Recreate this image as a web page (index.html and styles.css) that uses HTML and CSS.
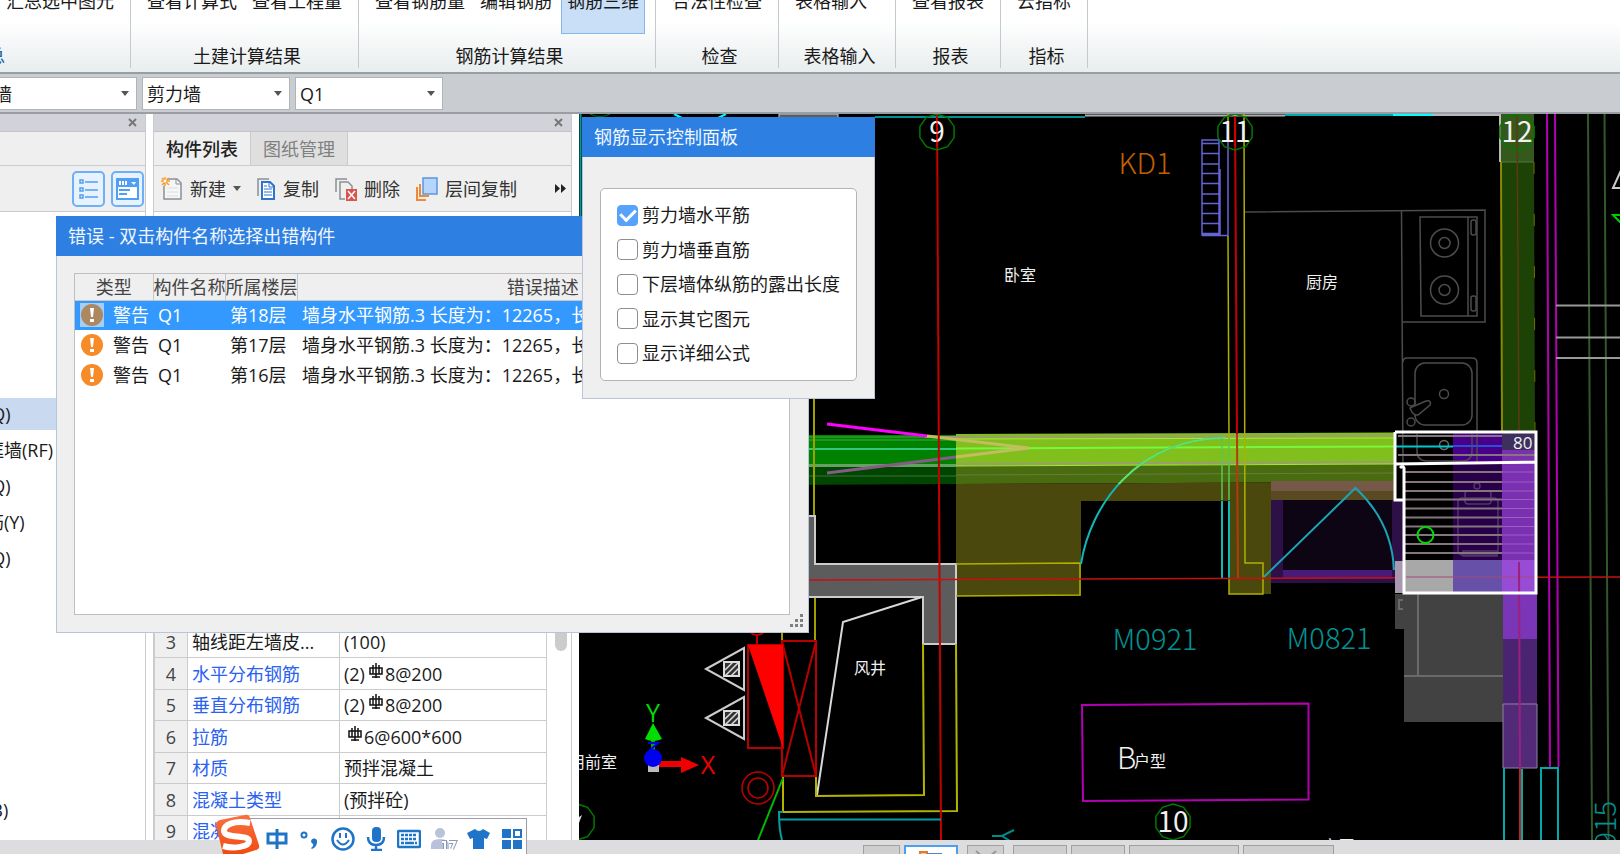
FILE: index.html
```
<!DOCTYPE html>
<html lang="zh-CN">
<head>
    <meta charset="UTF-8">
    <meta name="viewport" content="width=device-width, initial-scale=1.0">
    <title>钢筋三维</title>
    <link rel="stylesheet" href="styles.css">
</head>
<body>
    <header class="ribbon">
        <section class="group group-first">
            <div class="group-buttons"><button class="ribbon-button">汇总选中图元</button></div>
            <div class="group-name">汇总</div>
        </section>
        <section class="group">
            <div class="group-buttons">
                <button class="ribbon-button">查看计算式</button>
                <button class="ribbon-button">查看工程量</button>
            </div>
            <div class="group-name">土建计算结果</div>
        </section>
        <section class="group">
            <div class="group-buttons">
                <button class="ribbon-button">查看钢筋量</button>
                <button class="ribbon-button">编辑钢筋</button>
                <button class="ribbon-button active">钢筋三维</button>
            </div>
            <div class="group-name">钢筋计算结果</div>
        </section>
        <section class="group">
            <div class="group-buttons"><button class="ribbon-button">合法性检查</button></div>
            <div class="group-name">检查</div>
        </section>
        <section class="group group-wide">
            <div class="group-buttons"><button class="ribbon-button">表格输入</button></div>
            <div class="group-name">表格输入</div>
        </section>
        <section class="group">
            <div class="group-buttons"><button class="ribbon-button">查看报表</button></div>
            <div class="group-name">报表</div>
        </section>
        <section class="group">
            <div class="group-buttons"><button class="ribbon-button">云指标</button></div>
            <div class="group-name">指标</div>
        </section>
    </header>

    <div class="selector-bar">
        <div class="picker"><select aria-label="构件大类"><option>墙</option></select></div>
        <div class="picker"><select aria-label="构件类型"><option>剪力墙</option></select></div>
        <div class="picker"><select aria-label="构件"><option>Q1</option></select></div>
    </div>

    <main class="workspace">
        <aside class="tree-panel">
            <div class="panel-head"><button class="close" aria-label="关闭"><svg width="9" height="9" viewBox="0 0 9 9"><path d="M1 1L8 8M8 1L1 8"/></svg></button></div>
            <div class="tree-title"></div>
            <div class="tree-tools">
                <button class="view-button" aria-label="列表">
                    <svg width="21" height="22" viewBox="0 0 21 22" fill="none" stroke="#4f9ff5"><path d="M2 2h3v3H2zM2 10h3v3H2zM2 17h3v3H2z" stroke-width="1.500"/><path d="M7 4h13M7 12h13M7 19h13" stroke-width="1.500"/></svg>
                </button>
                <button class="view-button" aria-label="窗口">
                    <svg width="23" height="22" viewBox="0 0 23 22"><path d="M1 1h21v20H1z" fill="#fff" stroke="#4f9ff5" stroke-width="2"/><path d="M1 1h21v8H1z" fill="#4f9ff5"/><path d="M4 3v4M7 3v4M10 3v4" stroke="#fff" stroke-width="2"/><path d="M15 4h5l-2 3z" fill="#fff"/><path d="M3 12h11M3 16h8" stroke="#4f9ff5" stroke-width="2"/></svg>
                </button>
            </div>
            <div class="tree-view">
                <ul class="tree">
                    <li class="selected">剪力墙(Q)</li>
                    <li>人防门框墙(RF)</li>
                    <li>砌体墙(Q)</li>
                    <li>砌体加筋(Y)</li>
                    <li>保温墙(Q)</li>
                </ul>
                <ul class="tree">
                    <li>现浇板(B)</li>
                </ul>
            </div>
        </aside>

        <aside class="list-panel">
            <div class="panel-head"><button class="close" aria-label="关闭"><svg width="9" height="9" viewBox="0 0 9 9"><path d="M1 1L8 8M8 1L1 8"/></svg></button></div>
            <div class="tabs">
                <button class="tab current">构件列表</button>
                <button class="tab">图纸管理</button>
            </div>
            <div class="tools">
                <button class="tool">
                    <svg width="22" height="24" viewBox="0 0 22 24"><path d="M6 2h10l4 4v16H3V9" fill="#f6f6f6" stroke="#8a9096" stroke-width="1.500"/><path d="M15 2v5h5" fill="none" stroke="#8a9096"/><path d="M6 11h11M6 15h11M6 19h11" stroke="#ddd"/><path d="M4 0v9M0 4h9M1 1l7 7M8 1L1 8" stroke="#f79a28" stroke-width="1.500"/><circle cx="4" cy="4" r="1.500" fill="#fff"/></svg>
                    <span>新建</span><i class="caret"></i>
                </button>
                <button class="tool">
                    <svg width="19" height="24" viewBox="0 0 19 24"><path d="M1 19V2h11" fill="none" stroke="#8a9096" stroke-width="1.500"/><path d="M5 5h8l4 4v13H5z" fill="#fff" stroke="#2f74d0" stroke-width="2"/><path d="M12 5v5h5M7 12h8M7 15h8M7 18h8M7 9h3" fill="none" stroke="#2f74d0"/></svg>
                    <span>复制</span>
                </button>
                <button class="tool">
                    <svg width="22" height="24" viewBox="0 0 22 24"><path d="M1 15V2h11M5 18V5h8l4 4v3M5 18v4h5" fill="none" stroke="#8a9096" stroke-width="1.500"/><path d="M11 12h11v12H11z" fill="#d9534f"/><path d="M13 14l7 8M20 14l-7 8" stroke="#fff" stroke-width="1.500"/></svg>
                    <span>删除</span>
                </button>
                <button class="tool">
                    <svg width="22" height="24" viewBox="0 0 22 24"><path d="M1 10v13h9M4 7v12h9" fill="none" stroke="#f0883a" stroke-width="2"/><path d="M7 1h14v16H7z" fill="#b5d5fa" stroke="#5a96e0" stroke-width="1.500"/></svg>
                    <span>层间复制</span>
                </button>
                <button class="more" aria-label="更多"><svg width="12" height="9" viewBox="0 0 12 9"><path d="M0 0l5 4.500-5 4.500zM6 0l5 4.500-5 4.500z" fill="#222"/></svg></button>
            </div>
            <div class="property-view">
                <table class="properties">
                    <tbody>
                        <tr><th>3</th><td class="plain">轴线距左墙皮...</td><td>(100)</td></tr>
                        <tr><th>4</th><td>水平分布钢筋</td><td>(2)<svg class="rebar" viewBox="0 0 16 16"><use href="#rebar"/></svg>8@200</td></tr>
                        <tr><th>5</th><td>垂直分布钢筋</td><td>(2)<svg class="rebar" viewBox="0 0 16 16"><use href="#rebar"/></svg>8@200</td></tr>
                        <tr><th>6</th><td>拉筋</td><td><svg class="rebar" viewBox="0 0 16 16"><use href="#rebar"/></svg>6@600*600</td></tr>
                        <tr><th>7</th><td>材质</td><td>预拌混凝土</td></tr>
                        <tr><th>8</th><td>混凝土类型</td><td>(预拌砼)</td></tr>
                        <tr><th>9</th><td>混凝土强度</td><td></td></tr>
                    </tbody>
                </table>
                <div class="scroll"></div>
            </div>
        </aside>

        <section class="canvas">
            <svg class="drawing" viewBox="579 114 1041 726" preserveAspectRatio="xMinYMin slice" fill="none">
                <defs>
                    <path id="rebar" d="M2 5h12v6H2zM5 2v9M8 0v15M11 2v9M4 14h8" fill="none" stroke="#111" stroke-width="1.500"/>
                    <path id="axis" d="M0-18L10.600-14.600 17.100-5.600V5.600L10.600 14.600 0 18-10.600 14.600-17.100 5.600V-5.600L-10.600-14.600Z" stroke="#007a00" stroke-width="1.500"/>
                    <path id="swing" d="M1081 564C1090 506 1136 439 1225 438" stroke-width="2"/>
                    <clipPath id="on-beam"><path d="M1081 434h160v50h-160z"/></clipPath>
                    <g id="outlet">
                        <path d="M706 669L744 648V690Z" stroke="#ccc" stroke-width="2"/>
                        <path d="M724 662h15v14h-15z" fill="#333" stroke="#ddd" stroke-width="2"/>
                        <path d="M725 670l8-8M725 676l14-14M731 676l8-8" stroke="#ddd" stroke-width="1.500"/>
                    </g>
                </defs>

                <!-- top edge -->
                <path d="M580.500 114V216" stroke="#009a9a" stroke-width="2"/>
                <path d="M779 114h59v4h-59z" fill="#5e5e5e" stroke="#ccc"/>
                <path d="M590 114q10 5 20 0" stroke="#007a00"/>
                <path d="M674 114l8 4M718 118l8-4" stroke="#0ff" stroke-width="2"/>
                <path d="M875 117H1085" stroke="#009090" stroke-width="2"/>
                <path d="M1085 115.500H1285" stroke="#b0b0b0" stroke-width="2"/>
                <path d="M1285 115H1393" stroke="#00a8a8" stroke-width="2"/>
                <path d="M1393 115h40" stroke="#0ff" stroke-width="2"/>
                <path d="M1433 115h67v47" stroke="#b8b8b8" stroke-width="2"/>

                <!-- kitchen -->
                <g stroke="#4c4c4c" stroke-width="1.500">
                    <path d="M1245 212L1485 210V322H1403M1401.500 211L1403 465"/>
                    <path d="M1420 217h57v99h-56zM1468 217v99"/>
                    <rect x="1471" y="220" width="5" height="15" rx="2"/>
                    <rect x="1471" y="296" width="5" height="15" rx="2"/>
                    <circle cx="1444.500" cy="243" r="14"/><circle cx="1444.500" cy="243" r="5.500"/>
                    <circle cx="1444.500" cy="290" r="14"/><circle cx="1444.500" cy="290" r="5.500"/>
                    <path d="M1403 362q0-4 4-4h65q5 0 5 5V465"/>
                    <rect x="1415" y="363" width="57" height="62" rx="10"/>
                    <circle cx="1444" cy="394" r="4.500"/>
                    <circle cx="1411" cy="402" r="4"/><circle cx="1411" cy="422" r="4"/>
                    <path d="M1410 408q3 8 8 7l12-10q2-5-4-4l-14 6z" fill="#000"/>
                </g>

                <!-- radiator -->
                <path d="M1202 140h17v95h-17zM1220 169v66M1202 143.500h17M1202 153.500h17M1202 164h17M1202 173.500h17M1202 183.500h17M1202 194h17M1202 203.500h17M1202 213.500h17M1202 223.500h17M1202 233.500h17M1202 235.500h26V140" stroke="#6464d8" stroke-width="1.500"/>

                <!-- wall column on axis 12 -->
                <path d="M1501 114h33v48h-33z" fill="#35591c"/>
                <path d="M1501 162h33l1 270h-33z" fill="#1c4206"/>
                <path d="M1501 162h33" stroke="#4a7a34"/>
                <path d="M1501 162L1502 432" stroke="#8a8a00" stroke-width="2"/>
                <path d="M1534 162L1535 432" stroke="#6c7000" stroke-dasharray="12 40"/>
                <path d="M1517 114L1519 432" stroke="#5e3a10" stroke-width="1.500"/>

                <!-- outer wall lines -->
                <path d="M1547 114L1550 767M1555 114L1558.500 767" stroke="#b400b4" stroke-width="2"/>
                <path d="M1588 114L1592 840M1604.500 114L1608.500 840" stroke="#30592a" stroke-width="2"/>
                <path d="M1556 305.500h64M1556 337.500h64M1556 358h64" stroke="#999" stroke-width="2"/>
                <path d="M1622 168l-9 20h9" stroke="#ccc" stroke-width="2"/>
                <path d="M1622 215h-9l9 9" stroke="#0c0" stroke-width="2"/>

                <!-- beam bands -->
                <path d="M785 435h171v31H785z" fill="#008200"/>
                <path d="M785 466h171v18l-171 1z" fill="#004500"/>
                <path d="M956 434L1395 432.500V464L956 466z" fill="#80bf1c"/>
                <path d="M956 466L1395 464V482L956 484z" fill="#4a6c10"/>
                <path d="M956 484L1395 482V500H1271V594h-42V501H1081V596H956z" fill="#4b480d"/>
                <path d="M809 437H956M809 440H956" stroke="#3aac3a"/>
                <path d="M809 465.500H956" stroke="#64a264" stroke-width="3"/>
                <path d="M809 449H956" stroke="#32c87c" stroke-width="2"/>
                <path d="M809 476H956" stroke="#3c743c"/>
                <path d="M925 437L1395 435.500M956 464L1395 462" stroke="#9c9c70" stroke-width="2"/>
                <path d="M956 439L1395 438M956 466L1395 464" stroke="#a4e838"/>
                <path d="M956 448.500L1395 446.500" stroke="#78f83c" stroke-width="2"/>
                <path d="M956 475L1395 473" stroke="#6a7c38"/>
                <path d="M827 424L927 436" stroke="#f0f" stroke-width="3"/>
                <path d="M827 473L956 457" stroke="#865c86" stroke-width="3"/>
                <path d="M927 436L1029 448 956 457" stroke="#c4bc60" stroke-width="3"/>

                <!-- walls and shaft -->
                <path d="M814 398V516M815 597V640M782 632v8" stroke="#a0a000" stroke-width="2"/>
                <path d="M785 516h30v48h141v80h-33v-47H785z" fill="#5c5c5c" stroke="#ccc" stroke-width="2"/>
                <path d="M922 597L843 622 817 795" stroke="#d8d8d8" stroke-width="2"/>
                <path d="M816 776v20l108-1-1-151M783 777v35l174-1-1-167" stroke="#b4b400" stroke-width="2"/>
                <path d="M956 564l124-1v32l-124 1M1244 114l1 449h18v31h-34v-16M1228 236l1 204M1228 114v26" stroke="#b0b000" stroke-width="1.500"/>

                <!-- doors -->
                <path d="M1271 481h124v19h-124z" fill="#755848"/>
                <path d="M1271 491h124v9h-124z" fill="#5a4a22"/>
                <path d="M1271 500h132v83h-132z" fill="#2d1048"/>
                <path d="M1283 500h109v70h-109z" fill="#0d0414"/>
                <path d="M1283 570h109v9h-109z" fill="#4a1a78"/>
                <path d="M1264 577L1355.500 488Q1392 522 1394 570" stroke="#1aa4b4" stroke-width="2"/>
                <use href="#swing" stroke="#10b8b8"/>
                <use href="#swing" stroke="#66e060" clip-path="url(#on-beam)"/>
                <path d="M1222 438v62M1229 438v62" stroke="#5cc850" stroke-width="1.500"/>
                <path d="M1222 501v77M1229 501v77" stroke="#10b8b8" stroke-width="2"/>

                <!-- axis lines -->
                <path d="M937 114L941 840M1235 116L1237 434" stroke="#c40000" stroke-width="2"/>
                <path d="M1237 434L1238 578" stroke="#b43c0c" stroke-width="2"/>
                <path d="M809 580L1620 577" stroke="#c81010" stroke-width="1.500"/>

                <!-- selected slab -->
                <path d="M1404 594h99v128h-99zM1395 594h9v35h-9z" fill="#424242"/>
                <path d="M1418 594v82M1404 676h99M1403 600h-4v9h4" stroke="#6a6a6a" stroke-width="2"/>
                <path d="M1395 561h9v32h-9z" fill="#a898b0"/>
                <path d="M1405 560h49v33h-49z" fill="#a8a8a8"/>
                <path d="M1453 433h49v31h-49z" fill="#48008a"/>
                <path d="M1453 464h49v96h-49z" fill="#28004a"/>
                <path d="M1453 560h49v33h-49z" fill="#6650a8"/>
                <path d="M1502 433h34v17h-34z" fill="#3e305c"/>
                <path d="M1502 450h34v110h-34z" fill="#7a30b0"/>
                <path d="M1502 560h34v33h-34z" fill="#984cd6"/>
                <g stroke="#54346e" stroke-width="1.500">
                    <rect x="1458" y="498" width="40" height="57" rx="4"/>
                    <rect x="1465" y="491" width="26" height="13" rx="3"/>
                    <rect x="1463" y="551" width="34" height="5"/>
                    <circle cx="1477" cy="486" r="3"/>
                </g>
                <path d="M1417 434v17q0 10 10 10h35q10 0 10-10v-17M1477 434v28" stroke="#4c4c4c" stroke-width="1.500"/>
                <circle cx="1444" cy="445" r="4.500" stroke="#6c6c6c" stroke-width="1.500"/>
                <path d="M1398 436h104M1398 455h137M1405 472h97M1405 482h97M1405 491h97M1405 499.500h97M1405 508.500h97M1405 517.500h97M1405 526.500h97M1405 535h97M1405 544h97M1405 553h97" stroke="#84767a" stroke-width="2"/>
                <path d="M1502 472h32M1502 482h32M1502 491h32M1502 499.500h32M1502 508.500h32M1502 517.500h32M1502 526.500h32M1502 535h32M1502 544h32M1502 553h32" stroke="#9860c4"/>
                <path d="M1396 446.500h57" stroke="#00c8d0" stroke-width="2"/>
                <path d="M1453 446h49" stroke="#2c50d0" stroke-width="2"/>
                <path d="M1406 577h130" stroke="#a84878"/>
                <path d="M1503 593h34v46h-34z" fill="#7a36b6"/>
                <path d="M1503 639h34v65h-34z" fill="#4a2470"/>
                <path d="M1503 704h34v64h-34z" fill="#522a78" stroke="#9080a8"/>
                <path d="M1519 562L1520 768" stroke="#9c2080" stroke-width="2"/>
                <path d="M1520 768v72" stroke="#c02020" stroke-width="2"/>
                <path d="M1395 432h141v161h-132V468q-1-3-4 0M1395 432v68h8M1395 464l141-2" stroke="#fff" stroke-width="3"/>
                <circle cx="1425.500" cy="535" r="8" stroke="#0d0" stroke-width="2"/>
                <path d="M1504 840v-72M1522 769v71M1541 840v-72h17v72" stroke="#00a8a8" stroke-width="2"/>

                <!-- lower left equipment -->
                <circle cx="757" cy="626" r="9" stroke="#c00000" stroke-width="2"/>
                <path d="M757 635v10M748 645h35v103h-35zM782 641h34v135h-34zM782 641l34 135M816 641l-34 135" stroke="#b80000" stroke-width="2"/>
                <path d="M748 645h35v103z" fill="#f00"/>
                <circle cx="758" cy="788" r="16" stroke="#c00000" stroke-width="1.500"/>
                <circle cx="758" cy="788" r="10" stroke="#c00000" stroke-width="1.500"/>
                <use href="#outlet"/>
                <use href="#outlet" y="49"/>
                <path d="M783 778L758 840" stroke="#0b0" stroke-width="2"/>
                <path d="M783 812h-4q0 18 3 28M779 819.500h162" stroke="#00a0a0" stroke-width="2"/>
                <path d="M992 836h10l12-6M1002 836l8 5" stroke="#008a8a" stroke-width="2"/>
                <path d="M1082 705L1308.500 703.500V799.500L1083 801Z" stroke="#b400b4" stroke-width="2"/>

                <!-- coordinate system -->
                <path d="M648 764h11v8h-11z" fill="#bbb"/>
                <path d="M659 761h22v6h-22zM681 757l18 8-18 8z" fill="#f00000"/>
                <path d="M653 738v14" stroke="#0a0" stroke-width="4"/>
                <path d="M653 723l9 16q-9 4-17 0z" fill="#0d0"/>
                <circle cx="653" cy="758" r="9" fill="#0000f0"/>
                <path d="M648 743h10l-8 7" stroke="#0000e8" stroke-width="2"/>

                <use href="#axis" x="937" y="132"/>
                <use href="#axis" x="1235" y="132"/>
                <use href="#axis" x="1517" y="132"/>
                <use href="#axis" x="1173" y="822"/>
                <use href="#axis" x="577" y="822"/>
                <path d="M579 817l3-2-3 8z" fill="#ddd"/>
                <g class="axis-text">
                    <text x="937" y="142">9</text>
                    <text x="1235" y="142">11</text>
                    <text x="1517" y="142">12</text>
                    <text x="1173" y="832">10</text>
                </g>
                <path d="M1235 120v26M937 120v26" stroke="#e00000"/>
                <g class="code-text">
                    <text class="orange" x="1145" y="174">KD1</text>
                    <text x="1155" y="650">M0921</text>
                    <text x="1329" y="649">M0821</text>
                    <text class="upright" transform="translate(1616 801) rotate(-90)">M0915</text>
                </g>
                <g class="room-text">
                    <text x="1020" y="281">卧室</text>
                    <text x="1322" y="288">厨房</text>
                    <text x="870" y="674">风井</text>
                    <text x="593" y="768">用前室</text>
                    <text x="1150" y="767">户型</text>
                    <text x="1338" y="852">客厅</text>
                </g>
                <text class="unit" x="1117" y="769">B</text>
                <text class="size" x="1513" y="449">80</text>
                <text class="axis-y" x="653" y="722">Y</text>
                <text class="axis-x" x="708" y="774">X</text>
            </svg>
        </section>
    </main>

    <footer class="status">
        <button aria-label="选择"></button>
        <button class="on" aria-label="显示"><svg width="24" height="8" viewBox="0 0 24 8"><path d="M1 8V1h7v7" fill="#f8c89a" stroke="#e87828" stroke-width="2"/><path d="M8 3h14v5" fill="none" stroke="#4a86d0" stroke-width="2"/></svg></button>
        <button class="apart" aria-label="剪切"><svg width="24" height="8" viewBox="0 0 24 8"><path d="M2 1l8 7M22 1l-8 7" stroke="#999" stroke-width="2"/></svg></button>
        <button class="mid apart" aria-label="镜像"></button>
        <button class="mid" aria-label="移动"></button>
        <button class="long" aria-label="捕捉"></button>
        <button class="wide" aria-label="正交"></button>
    </footer>

    <section class="window error-window">
        <h2 class="window-title">错误 - 双击构件名称选择出错构件</h2>
        <div class="error-box">
            <table class="errors">
                <thead>
                    <tr><th class="col-type">类型</th><th class="col-name">构件名称</th><th class="col-floor">所属楼层</th><th>错误描述</th></tr>
                </thead>
                <tbody>
                    <tr class="selected"><td><span class="kind"><svg class="warn" viewBox="0 0 24 24"><circle cx="12" cy="12" r="11"/><path d="M10 5h4l-1 9h-2zM10 16h4v3h-4z" fill="#fff"/></svg>警告</span></td><td>Q1</td><td>第18层</td><td>墙身水平钢筋.3 长度为：12265，长</td></tr>
                    <tr><td><span class="kind"><svg class="warn" viewBox="0 0 24 24"><circle cx="12" cy="12" r="11"/><path d="M10 5h4l-1 9h-2zM10 16h4v3h-4z" fill="#fff"/></svg>警告</span></td><td>Q1</td><td>第17层</td><td>墙身水平钢筋.3 长度为：12265，长</td></tr>
                    <tr><td><span class="kind"><svg class="warn" viewBox="0 0 24 24"><circle cx="12" cy="12" r="11"/><path d="M10 5h4l-1 9h-2zM10 16h4v3h-4z" fill="#fff"/></svg>警告</span></td><td>Q1</td><td>第16层</td><td>墙身水平钢筋.3 长度为：12265，长</td></tr>
                </tbody>
            </table>
        </div>
        <svg class="grip" width="13" height="13" viewBox="0 0 13 13"><path d="M10 0h3v3h-3zM5 5h3v3H5zM10 5h3v3h-3zM0 10h3v3H0zM5 10h3v3H5zM10 10h3v3h-3z" fill="#7a8088"/></svg>
    </section>

    <section class="window rebar-window">
        <h2 class="window-title">钢筋显示控制面板</h2>
        <form class="options">
            <label><input type="checkbox" checked>剪力墙水平筋</label>
            <label><input type="checkbox">剪力墙垂直筋</label>
            <label><input type="checkbox">下层墙体纵筋的露出长度</label>
            <label><input type="checkbox">显示其它图元</label>
            <label><input type="checkbox">显示详细公式</label>
        </form>
    </section>

    <div class="ime">
        <svg class="ime-logo" width="46" height="40" viewBox="0 0 46 40">
            <defs><linearGradient id="flame" x1="0" y1="0" x2="0" y2="1"><stop offset="0" stop-color="#fa7040"/><stop offset="1" stop-color="#f04c12"/></linearGradient></defs>
            <path d="M1 11Q1 7 5 6L30 1q4-1 5 3l9 27q1 4-3 5l-13 4H8z" fill="url(#flame)"/>
            <path d="M35 9C18 6 9 11 9 17c0 8 25 3 25 10 0 6-15 8-26 5" fill="none" stroke="#fff" stroke-width="6"/>
        </svg>
        <button aria-label="中文"><svg width="24" height="24" viewBox="0 0 24 24"><path d="M3 7h18v9H3zM12 2v20" fill="none" stroke="#1f74c8" stroke-width="3"/></svg></button>
        <button aria-label="标点"><svg width="24" height="24" viewBox="0 0 24 24"><circle cx="6" cy="8" r="2.500" fill="none" stroke="#1f74c8" stroke-width="2"/><path d="M13 14a3 3 0 1 1 6 1q0 5-5 7l-1-1q3-2 2-4-2-1-2-3z" fill="#1f74c8"/></svg></button>
        <button aria-label="表情"><svg width="24" height="24" viewBox="0 0 24 24"><circle cx="12" cy="12" r="10.500" fill="none" stroke="#1f74c8" stroke-width="2.500"/><path d="M9 6v5M15 6v5M6 13q6 9 12 0" fill="none" stroke="#1f74c8" stroke-width="2"/></svg></button>
        <button aria-label="语音"><svg width="24" height="24" viewBox="0 0 24 24"><rect x="8" y="0" width="9" height="15" rx="4" fill="#1f74c8"/><path d="M4 10q0 8 8 8t8-8M12 18v5M7 23h11" fill="none" stroke="#1f74c8" stroke-width="2.500"/></svg></button>
        <button aria-label="键盘"><svg width="24" height="24" viewBox="0 0 24 24"><rect x="1" y="4" width="22" height="16" rx="1" fill="none" stroke="#1f74c8" stroke-width="2.500"/><path d="M4 8h16M4 12h16" stroke="#1f74c8" stroke-width="2.500" stroke-dasharray="3 1"/><path d="M4 16h3M8 16h9M18 16h2" stroke="#1f74c8" stroke-width="2.500"/></svg></button>
        <button aria-label="账号"><svg width="28" height="24" viewBox="0 0 28 24"><circle cx="10" cy="6" r="5" fill="#b8c2d8"/><path d="M1 22v-4q0-6 9-6t9 6v4z" fill="#b8c2d8"/><path d="M12 15h3v7M19 15h6l-3 7" fill="none" stroke="#8c98b8" stroke-width="4"/><path d="M12 15h3v7M19 15h6l-3 7" fill="none" stroke="#fff" stroke-width="2"/></svg></button>
        <button aria-label="皮肤"><svg width="24" height="24" viewBox="0 0 24 24"><path d="M8 2q4 4 8 0l7 4-3 6-3-1v11H6V11l-3 1-3-6z" fill="#1f74c8"/></svg></button>
        <button aria-label="工具箱"><svg width="24" height="24" viewBox="0 0 24 24"><path d="M2 2h9v9H2zM2 13h9v9H2zM13 13h9v9h-9z" fill="#1f74c8"/><path d="M14 3h7v7h-7z" fill="none" stroke="#1f74c8" stroke-width="2"/></svg></button>
    </div>
</body>
</html>
```
FILE: styles.css
```
* {
    box-sizing: border-box;
}
body {
    margin: 0;
    height: 100vh;
    display: flex;
    flex-direction: column;
    overflow: hidden;
    position: relative;
    background: #fff;
    color: #1a1a1a;
    font-family: "Open Sans", "Noto Sans CJK SC", sans-serif;
    font-size: 18px;
    line-height: 24px;
}
button {
    font: inherit;
    color: inherit;
    border: none;
    background: none;
    padding: 0;
    white-space: nowrap;
}

/* ribbon */
.ribbon {
    display: flex;
    flex: none;
    height: 74px;
    overflow: hidden;
    background: linear-gradient(#fff 30%, #e8edee);
    border-bottom: 2px solid #989ea4;
}
.group {
    display: flex;
    flex-direction: column;
    padding: 0 10px;
    height: 68px;
    border-right: 1px solid #c6cacc;
}
.group-first {
    width: 131px;
    align-items: flex-end;
}
.group-first .group-name {
    align-self: flex-start;
    margin-left: -46px;
    color: #1f5f9f;
}
.group-wide {
    width: 117px;
}
.group-buttons {
    display: flex;
    gap: 3px;
    margin-top: -12px;
}
.ribbon-button {
    height: 46px;
    padding: 0 5px 20px;
    border: 1px solid transparent;
}
.ribbon-button.active {
    background: #c9dff8;
    border-color: #86b6ea;
}
.group-name {
    margin-top: 10px;
    padding-left: 5px;
    text-align: center;
    white-space: nowrap;
}

/* selectors */
.selector-bar {
    display: flex;
    flex: none;
    gap: 5px;
    height: 40px;
    padding-top: 3px;
    background: #c9ccd1;
    border-bottom: 2px solid #989ea4;
}
.picker {
    position: relative;
    width: 148px;
    height: 33px;
}
.picker:first-child {
    margin-left: -11px;
}
.picker select {
    appearance: none;
    width: 100%;
    height: 100%;
    padding: 0 4px;
    border: 1px solid #b0b3b7;
    border-radius: 0;
    background: #fff;
    color: #1a1a1a;
    font: inherit;
}
.picker::after {
    content: "";
    position: absolute;
    right: 8px;
    top: 14px;
    border: 4px solid transparent;
    border-top: 5px solid #555;
    border-bottom: 0;
}

/* side panels */
.workspace {
    display: flex;
    flex: 1;
    gap: 7px;
    min-height: 0;
}
.tree-panel,
.list-panel {
    display: flex;
    flex-direction: column;
    flex: none;
    border-right: 1px solid #c8cbd0;
    overflow: hidden;
}
.tree-panel {
    width: 146px;
}
.list-panel {
    width: 419px;
    border-left: 1px solid #c8cbd0;
}
.panel-head {
    display: flex;
    justify-content: flex-end;
    align-items: center;
    flex: none;
    height: 18px;
    padding-right: 8px;
    background: #d2d3d9;
    border-bottom: 1px solid #c0c3c8;
}
.close {
    display: flex;
}
.close path {
    stroke: #777;
    stroke-width: 2;
}
.tree-title,
.tabs {
    flex: none;
    height: 34px;
    background: #efefef;
    border-bottom: 1px solid #c8cbd0;
}
.tree-tools,
.tools {
    display: flex;
    align-items: center;
    flex: none;
    height: 46px;
    background: #efefef;
    border-bottom: 1px solid #c8cbd0;
}
.tree-tools {
    justify-content: flex-end;
    gap: 6px;
    padding-right: 1px;
}
.view-button {
    display: flex;
    align-items: center;
    justify-content: center;
    width: 33px;
    height: 36px;
    border: 2px solid #6bb0f8;
    border-radius: 5px;
    background: #e8f2fd;
}
.tree-view {
    display: flex;
    flex: 1;
    flex-direction: column;
    justify-content: space-between;
    padding: 186px 0 14px;
}
.tree {
    display: flex;
    flex-direction: column;
    gap: 4px;
    margin: 0;
    padding: 0;
    list-style: none;
}
.tree li {
    height: 32px;
    line-height: 32px;
    text-indent: -68px;
    white-space: nowrap;
}
.tree .selected {
    background: #c9d9f0;
}
.tabs {
    display: flex;
}
.tab {
    width: 97px;
    border-right: 1px solid #c8cbd0;
    background: #dfdfdf;
    color: #808080;
}
.tab.current {
    background: #efefef;
    color: #222;
    font-weight: 500;
}
.tools {
    padding: 0 4px 0 7px;
    color: #333;
}
.tool {
    display: flex;
    align-items: center;
    gap: 7px;
    margin-right: 16px;
}
.tool svg {
    flex: none;
}
.caret {
    border: 4px solid transparent;
    border-top: 5px solid #555;
    border-bottom: 0;
}
.more {
    display: flex;
    margin-left: auto;
}

/* property grid */
.property-view {
    display: flex;
    flex: 1;
    padding-top: 414px;
}
.properties {
    width: 393px;
    height: 219px;
    table-layout: fixed;
    border-collapse: collapse;
}
.properties tr {
    height: 31px;
}
.properties tr:nth-child(even) {
    height: 32px;
}
.properties th,
.properties td {
    padding: 0 4px;
    border: 1px solid #ccc;
    line-height: 24px;
    text-align: left;
    white-space: nowrap;
    overflow: hidden;
}
.properties th {
    width: 33px;
    background: #efefef;
    color: #444;
    font-weight: 400;
    text-align: center;
}
.properties td:nth-child(2) {
    width: 152px;
    color: #2a62f0;
}
.properties td.plain {
    color: #1a1a1a;
}
.rebar {
    width: 16px;
    height: 16px;
    margin: 0 1px 0 3px;
    vertical-align: 2px;
}
.scroll {
    width: 12px;
    height: 25px;
    margin-left: 8px;
    background: #ccc;
    border-radius: 0 0 6px 6px;
}

/* drawing */
.canvas {
    flex: 1;
    min-width: 0;
    overflow: hidden;
    background: #000;
}
.drawing {
    display: block;
    width: 100%;
    height: 100%;
}
.drawing text {
    fill: #f0f0f0;
}
.axis-text {
    font-family: "Noto Sans CJK SC", sans-serif;
    font-size: 28px;
    text-anchor: middle;
}
.code-text {
    font-family: "Noto Sans CJK SC", sans-serif;
    font-size: 29px;
    font-weight: 300;
    text-anchor: middle;
}
.drawing .code-text text {
    fill: #009292;
}
.drawing .code-text .orange {
    fill: #c06000;
}
.code-text .upright {
    text-anchor: end;
}
.room-text {
    font-size: 16px;
    text-anchor: middle;
}
.unit {
    font-family: "Noto Sans CJK SC", sans-serif;
    font-size: 30px;
    font-weight: 300;
}
.size {
    font-size: 17px;
}
.axis-x,
.axis-y {
    font-size: 25px;
    text-anchor: middle;
}
.drawing .axis-y {
    fill: #0d0;
}
.drawing .axis-x {
    fill: #f00000;
}

/* status bar */
.status {
    display: flex;
    flex: none;
    gap: 4px;
    height: 14px;
    padding: 5px 0 0 863px;
    overflow: hidden;
    background: #dddddf;
}
.status button {
    display: flex;
    flex: none;
    justify-content: center;
    width: 37px;
    height: 24px;
    padding-top: 4px;
    background: #cfcfcf;
    border: 1px solid #a0a0a0;
}
.status .on,
.status .mid {
    width: 54px;
}
.status .apart {
    margin-left: 5px;
}
.status .on {
    background: #fff;
    border: 2px solid #4a9ff0;
}
.status .long {
    width: 110px;
}
.status .wide {
    width: 91px;
}

/* floating windows */
.window {
    position: absolute;
    background: #efefef;
    border: 1px solid #b9c4d8;
    border-top: 0;
}
.window-title {
    height: 40px;
    margin: 0 -1px;
    padding-left: 12px;
    background: #2d80e2;
    color: #f0f6ff;
    font-size: 18px;
    font-weight: 400;
    line-height: 40px;
}
.error-window {
    left: 56px;
    top: 216px;
    width: 753px;
    height: 417px;
}
.error-box {
    height: 342px;
    margin: 17px 18px 0 17px;
    background: #fff;
    border: 1px solid #bfbfbf;
}
.errors {
    width: 100%;
    table-layout: fixed;
    border-collapse: collapse;
}
.errors th {
    height: 26px;
    padding: 0;
    background: #efefef;
    border-right: 1px solid #c8c8c8;
    border-bottom: 1px solid #c8c8c8;
    color: #444;
    font-weight: 400;
    white-space: nowrap;
}
.errors td {
    height: 30px;
    padding: 0 5px;
    white-space: nowrap;
}
.errors .col-type {
    width: 78px;
}
.errors .col-name,
.errors .col-floor {
    width: 72px;
}
.errors .selected {
    background: #3399ff;
    color: #fff;
}
.kind {
    display: flex;
    align-items: center;
    gap: 9px;
}
.warn {
    flex: none;
    width: 24px;
    height: 24px;
}
.warn circle {
    fill: #f68b28;
}
.selected .warn {
    background: #a5cdf5;
}
.selected .warn circle {
    fill: #ab8860;
}
.grip {
    position: absolute;
    right: 5px;
    bottom: 5px;
}
.rebar-window {
    left: 582px;
    top: 117px;
    width: 293px;
    height: 282px;
}
.options {
    display: flex;
    flex-direction: column;
    justify-content: space-between;
    margin: 31px 17px 0;
    padding: 14px 15px 15px 16px;
    height: 193px;
    background: #fff;
    border: 1px solid #b4b4b4;
    border-radius: 5px;
}
.options label {
    display: flex;
    align-items: center;
    gap: 4px;
    white-space: nowrap;
}
.options input {
    appearance: none;
    flex: none;
    width: 21px;
    height: 21px;
    margin: 0;
    border: 1px solid #8e8e8e;
    border-radius: 4px;
    background: #fff;
}
.options input:checked {
    display: flex;
    justify-content: center;
    align-items: center;
    border-color: #57a2fa;
    background: #57a2fa;
}
.options input:checked::after {
    content: "";
    width: 7px;
    height: 12px;
    margin-bottom: 3px;
    border: solid #fff;
    border-width: 0 3px 3px 0;
    transform: rotate(45deg);
}

/* input method bar */
.ime {
    position: absolute;
    left: 238px;
    bottom: 0;
    display: flex;
    align-items: center;
    gap: 9px;
    width: 289px;
    height: 36px;
    padding: 4px 6px 0 26px;
    background: #fff;
    border: 1px solid #9c9cac;
    border-bottom: 0;
}
.ime button {
    display: flex;
}
.ime-logo {
    position: absolute;
    left: -24px;
    bottom: 0;
}
```
